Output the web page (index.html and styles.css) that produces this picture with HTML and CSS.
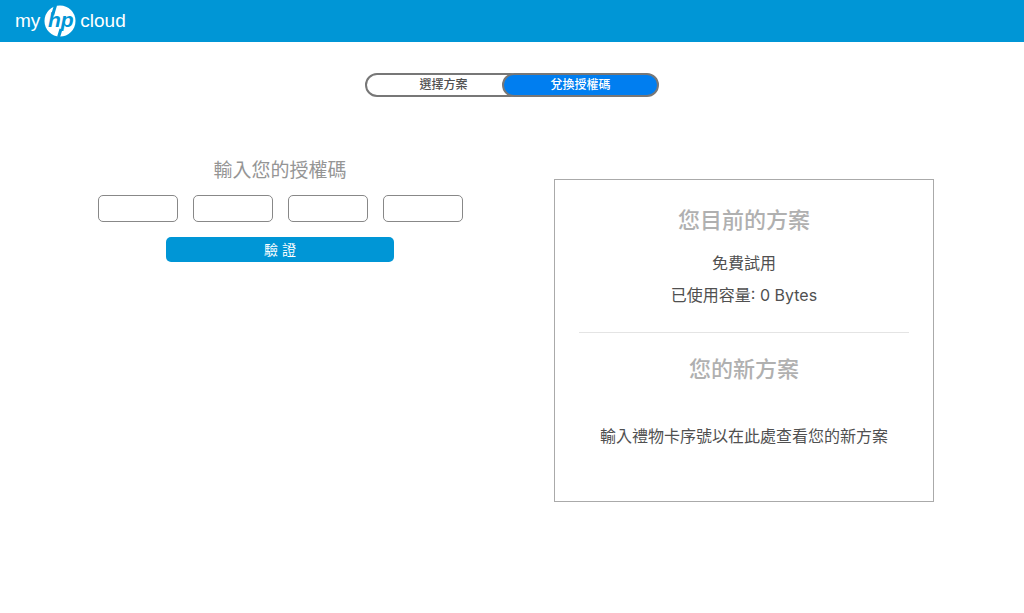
FILE: index.html
```html
<!DOCTYPE html>
<html lang="zh-Hant">
<head>
<meta charset="utf-8">
<meta name="viewport" content="width=device-width, initial-scale=1">
<title>my hp cloud</title>
<link rel="stylesheet" href="styles.css">
</head>
<body>
<header class="topbar">
  <a class="brand" href="#">
    <span>my</span>
    <svg class="brand-mark" viewBox="0 0 32 32" aria-label="hp" role="img">
      <circle cx="16" cy="16" r="15.5" fill="#fff"/>
      <path d="M11.6 0 8.6 10M17 24 14.6 32" stroke="#0096d6" stroke-width="3" fill="none"/>
      <text class="mark-text" x="4" y="22">hp</text>
    </svg>
    <span>cloud</span>
  </a>
</header>
<main class="page">
  <nav class="tabs">
    <button class="tab" type="button">選擇方案</button>
    <button class="tab tab-active" type="button" aria-current="page">兌換授權碼</button>
  </nav>
  <div class="columns">
    <form class="redeem">
      <h1 class="redeem-title">輸入您的授權碼</h1>
      <div class="codes">
        <input class="code" type="text" aria-label="授權碼第 1 段">
        <input class="code" type="text" aria-label="授權碼第 2 段">
        <input class="code" type="text" aria-label="授權碼第 3 段">
        <input class="code" type="text" aria-label="授權碼第 4 段">
      </div>
      <button class="verify" type="button">驗 證</button>
    </form>
    <section class="plan">
      <h2 class="plan-title">您目前的方案</h2>
      <p class="plan-line">免費試用</p>
      <p class="plan-line">已使用容量: 0 Bytes</p>
      <hr class="divider">
      <h2 class="plan-title">您的新方案</h2>
      <p class="plan-line plan-hint">輸入禮物卡序號以在此處查看您的新方案</p>
    </section>
  </div>
</main>
</body>
</html>
```

FILE: styles.css
```css
* {
  box-sizing: border-box;
}

body {
  margin: 0;
  background: #fff;
  color: #505050;
  font-family: Inter, "Noto Sans CJK TC", sans-serif;
}

h1, h2, p {
  margin: 0;
  font-weight: 400;
}

button, input {
  font-family: inherit;
}

.topbar {
  display: flex;
  align-items: center;
  height: 42px;
  padding: 0 15px 1px;
  background: #0096d6;
}

.brand {
  display: flex;
  align-items: center;
  gap: 4px;
  color: #fff;
  font-family: "Liberation Sans", Arial, sans-serif;
  font-size: 19px;
  line-height: 40px;
  text-decoration: none;
}

.brand-mark {
  width: 32px;
  height: 32px;
}

.mark-text {
  fill: #0096d6;
  font: italic 700 21px "Liberation Sans", Arial, sans-serif;
}

.page {
  padding: 31px 48px;
}

.tabs {
  display: flex;
  justify-content: center;
}

.tab {
  width: 157px;
  height: 24px;
  padding: 0;
  border: 2px solid #777;
  border-radius: 12px;
  background: #fff;
  color: #505050;
  font-size: 12px;
  font-weight: 500;
  line-height: 20px;
}

.tab-active {
  z-index: 1;
  margin-left: -20px;
  background: #007ef0;
  color: #fff;
}

.columns {
  display: grid;
  grid-template-columns: 1fr 1fr;
  align-items: start;
  padding-top: 58px;
}

.redeem {
  display: flex;
  flex-direction: column;
  align-items: center;
}

.redeem-title {
  margin-top: 2px;
  color: #959595;
  font-size: 19px;
  line-height: 28px;
}

.codes {
  display: flex;
  gap: 15px;
  margin-top: 10px;
}

.code {
  width: 80px;
  height: 27px;
  padding: 0 8px;
  border: 1px solid #888;
  border-radius: 5px;
  background: #fff;
  font-size: 14px;
}

.verify {
  width: 228px;
  height: 25px;
  margin-top: 15px;
  padding: 0 0 2px;
  border: 0;
  border-radius: 5px;
  background: #0096d6;
  color: #fff;
  font-size: 14px;
}

.plan {
  justify-self: center;
  width: 100%;
  max-width: 380px;
  margin-top: 24px;
  padding: 24px 24px 53px;
  border: 1px solid #aaa;
  text-align: center;
}

.plan-title {
  color: #b0b0b0;
  font-size: 22px;
  font-weight: 500;
  line-height: 32px;
}

.plan-line {
  margin-top: 8px;
  font-size: 16px;
  line-height: 24px;
}

.plan-title + .plan-line {
  margin-top: 15px;
}

.divider {
  height: 1px;
  margin: 25px 0 20px;
  border: 0;
  background: #e4e4e4;
}

.plan-title + .plan-hint {
  margin-top: 39px;
}
```
